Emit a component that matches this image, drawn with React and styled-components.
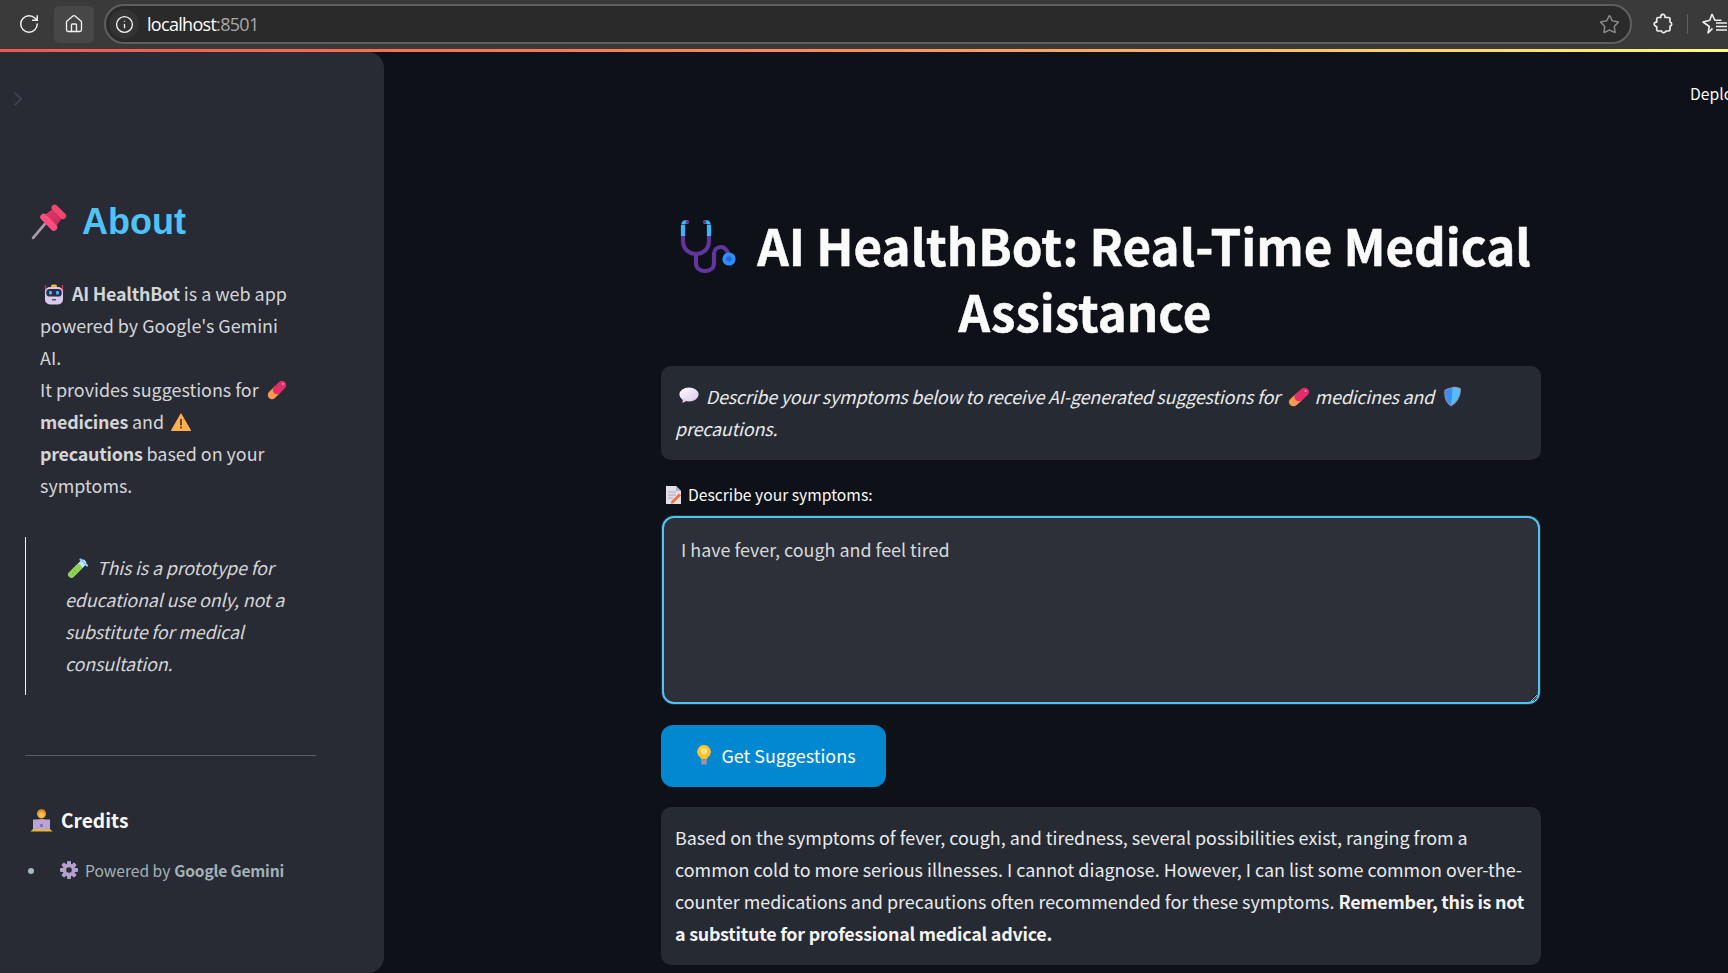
import React from "react";
import styled, { createGlobalStyle } from "styled-components";
import { RotateCw, Home, Info, Star, ChevronRight } from "lucide-react";

const Global = createGlobalStyle`
  html, body { margin: 0; padding: 0; background: #0e1117; }
  body { width: 1728px; height: 973px; overflow: hidden; font-family: "Noto Sans CJK SC", "Noto Sans", sans-serif; }
  * { box-sizing: border-box; }
`;

const Page = styled.div`
  width: 1728px; height: 973px; display: flex; flex-direction: column; overflow: hidden; background: #0e1117;
`;
const BrowserBar = styled.div`
  height: 49px; flex: none; display: flex; align-items: center; background: #3a3a3a; overflow: hidden; padding-bottom: 1px;
  color: #f2f2f2;
`;
const ReloadSlot = styled.div`
  width: 54px; flex: none; display: flex; justify-content: center; padding-left: 4px;
`;
const HomeButton = styled.div`
  width: 40px; height: 37px; flex: none; border-radius: 5px; background: #474747; display: flex; align-items: center; justify-content: center;
`;
const Omnibox = styled.div`
  margin-left: 10px; width: 1528px; height: 40px; flex: none; border: 2px solid #5f5f5f; border-radius: 20px; background: #2a2a2a;
  display: flex; align-items: center; padding: 0 10px 0 3px;
`;
const InfoChip = styled.div`
  width: 30px; height: 30px; border-radius: 50%; background: #333; display: flex; align-items: center; justify-content: center; flex: none;
`;
const Url = styled.div`
  margin-left: 8px; flex: 1; font-family: "Open Sans", sans-serif; font-size: 18px; letter-spacing: -0.7px; color: #fff;
  span { color: #a8a8a8; }
`;
const ToolIcon = styled.div`
  margin-left: ${p => p.$gap}px; flex: none; display: flex; align-items: center;
`;
const ToolDivider = styled.div`
  margin-left: 14px; width: 1px; height: 20px; background: #5f5f5f; flex: none;
`;
const Rainbow = styled.div`
  height: 3px; flex: none; background: linear-gradient(90deg, #f2564f 0%, #fb8f5c 50%, #fdd76e 85%, #fffd80 100%);
`;
const Body = styled.div`
  flex: 1; display: flex; min-height: 0;
`;
const Sidebar = styled.aside`
  width: 384px; flex: none; height: 100%; background: #282b33; border-radius: 0 16px 16px 0; padding: 35px 25px 0 25px;
  display: flex; flex-direction: column;
`;
const Collapse = styled.div`
  margin-left: -19px; height: 24px; color: #3b404b; display: flex; align-items: center;
`;
const AboutTitle = styled.h2`
  margin: 90px 0 0 6px; height: 42px; display: flex; align-items: center; gap: 13px;
  font-family: "Liberation Sans", sans-serif; font-weight: 700; font-size: 36px; line-height: 42px; color: #4fc3f7;
`;
const AboutText = styled.p`
  margin: 34px 0 0 15px; width: 251px; font-size: 17.92px; line-height: 32px; color: #d4d5d8;
  b { font-weight: 700; letter-spacing: -0.25px; }
`;
const Quote = styled.blockquote`
  margin: 36px 0 0; border-left: 1px solid #f0f0f0; height: 158px; padding: 14px 0 0 39px; font-style: italic; font-size: 17.92px; line-height: 32px; color: #d4d5d8;
  width: 291px; letter-spacing: -0.15px;
`;
const Rule = styled.hr`
  margin: 60px 0 1px; width: 291px; border: 0; border-top: 1px solid #5a5d63; height: 0;
`;
const CreditsTitle = styled.h3`
  margin: 47px 0 0 5px; display: flex; align-items: center; gap: 8px; font-size: 19.2px; line-height: 32px; font-weight: 700; color: #fafafa;
`;
const CreditsList = styled.ul`
  margin: 20px 0 0; padding: 0; list-style: none;
`;
const CreditsItem = styled.li`
  display: flex; align-items: center; font-size: 15.6px; line-height: 28px; color: #a3b1b8; padding-left: 35px; position: relative;
  b { font-weight: 700; margin-left: 4px; letter-spacing: -0.2px; }
  &::before { content: ""; position: absolute; left: 3px; top: 12px; width: 6px; height: 6px; border-radius: 50%; background: #a3b8bf; }
`;
const Main = styled.main`
  flex: 1; min-width: 0; overflow: hidden; position: relative; padding: 0 0 0 277px;
`;
const DeployText = styled.div`
  position: absolute; top: 29px; left: 1306px; font-size: 15.7px; line-height: 26px; color: #fafafa; white-space: nowrap;
`;
const Column = styled.div`
  width: 880px; padding-top: 160px;
`;
const Title = styled.h1`
  margin: 0; font-size: 49.28px; line-height: 66px; font-weight: 700; color: #fafafa; text-align: center; -webkit-text-stroke: 0.5px #fafafa;
  &::after { content: ""; display: inline-block; width: 32px; }
`;
const Panel = styled.div`
  margin-top: ${p => p.$top}px; padding: 14px 10px 16px 14px; background: #262a33; border-radius: 10px; font-size: 17.92px; line-height: 32px; color: #e8eaec;
  font-style: ${p => (p.$italic ? "italic" : "normal")};
  letter-spacing: ${p => (p.$italic ? "-0.19px" : "0")};
  b { font-weight: 700; color: #f3f3f3; letter-spacing: -0.25px; }
`;
const FieldLabel = styled.label`
  margin-top: 22px; height: 26px; padding-left: 5px; display: flex; align-items: center; gap: 7px; font-size: 15.68px; line-height: 26px; color: #fafafa;
`;
const Symptoms = styled.textarea`
  display: block; margin: 8px 0 0 1px; width: 878px; height: 188px; padding: 15px 17px; border: 2px solid #4fc3f7; border-radius: 12px; outline: 0;
  background: #2d3039; color: #d8d9db; font-family: inherit; font-size: 17.92px; line-height: 32px; color-scheme: dark;
  box-shadow: 0 0 0 1px #262a33;
`;
const SuggestButton = styled.button`
  display: flex; align-items: center; justify-content: center; gap: 8px; margin-top: 21px; width: 225px; height: 62px; border: 0; border-radius: 12px;
  padding: 0 0 2px 4px;
  background: #0288d1; color: #fff; font-family: inherit; font-size: 17.92px;
`;
const Glyph = styled.svg`
  display: inline-block; flex: none; vertical-align: ${p => p.$drop ?? -3}px; margin: ${p => p.$margin ?? "0 3px"};
`;

const Pin = () => (
  <Glyph width="38" height="38" viewBox="0 0 36 36" $margin="-2px 0 0 0">
    <defs><linearGradient id="pinG" x1="0" y1="0" x2="1" y2="1"><stop offset="0" stopColor="#f0356a"/><stop offset="1" stopColor="#b92c58"/></linearGradient></defs>
    <path d="M2 34L13 21" stroke="#a89aa6" strokeWidth="2.6" strokeLinecap="round"/>
    <path d="M12 13l8-6 9 9-6 8z" fill="url(#pinG)"/>
    <rect x="18" y="6" width="17" height="6" rx="3" transform="rotate(45 26 9)" fill="#f4476f"/>
    <rect x="7" y="16" width="20" height="6.5" rx="3.2" transform="rotate(45 17 19)" fill="#ff4f80"/>
  </Glyph>
);
const Robot = () => (
  <Glyph width="20" height="21" viewBox="0 0 20 21" $drop={-4} $margin="0 4px">
    <path d="M1.5 1v8M18.5 1v8" stroke="#d6335f" strokeWidth="1.2"/>
    <rect x="7" y="0.5" width="6" height="3" rx="1.5" fill="#f5b13c"/>
    <rect x="1" y="3" width="18" height="17.5" rx="5" fill="#d9c9ea"/>
    <rect x="2.3" y="5" width="15.4" height="7.6" rx="3.4" fill="#2d2a48"/>
    <rect x="5" y="7" width="3" height="3.5" rx="1" fill="#35b7f7"/>
    <rect x="12" y="7" width="3" height="3.5" rx="1" fill="#35b7f7"/>
    <rect x="8" y="15" width="4" height="1.4" fill="#544a68"/>
  </Glyph>
);
const Pill = ({ size = 20 }) => (
  <Glyph width={size} height="20" viewBox="0 0 20 20" preserveAspectRatio="none" $drop={-3} $margin="0 1px 0 4px">
    <path d="M5 15L10 10" stroke="#f79a4b" strokeWidth="8.4" strokeLinecap="round"/>
    <path d="M10 10L15 5" stroke="#e42c68" strokeWidth="8.4" strokeLinecap="round"/>
    <circle cx="16" cy="4" r="1" fill="#ff9ab8"/>
  </Glyph>
);
const Warning = () => (
  <Glyph width="20" height="18" viewBox="0 0 20 18" $drop={-2}>
    <path d="M10 .8L19.6 17.5H.4z" fill="#ffb04d" stroke="#ffb04d" strokeLinejoin="round"/>
    <rect x="9.1" y="6" width="1.8" height="6.5" fill="#5a4040"/><rect x="9.1" y="13.6" width="1.8" height="1.8" fill="#5a4040"/>
  </Glyph>
);
const Tube = () => (
  <Glyph width="20" height="20" viewBox="0 0 20 20" $margin="0 5px 0 3px">
    <path d="M3.5 16.5L15 5" stroke="#c6e6f7" strokeWidth="6.4" strokeLinecap="round"/>
    <path d="M3.5 16.5L10.5 9.5" stroke="#8ed24f" strokeWidth="6.4" strokeLinecap="round"/>
    <path d="M12.5 1.5L19 7.5" stroke="#8cd0f5" strokeWidth="2.2" strokeLinecap="round"/>
    <path d="M6 13h1.4M4 15.5h1.4" stroke="#5ea635" strokeWidth="1"/>
  </Glyph>
);
const Coder = () => (
  <Glyph width="23" height="23" viewBox="0 0 23 23" $margin="0">
    <circle cx="11.5" cy="4.8" r="4.6" fill="#e8911f"/>
    <circle cx="11.5" cy="6" r="3" fill="#f6c04e"/>
    <path d="M5 12q6.5-4 13 0v3H5z" fill="#d9a635"/>
    <rect x="3" y="10.5" width="17" height="11" fill="#b9a3da"/>
    <rect x="10" y="15" width="3" height="3" fill="#8b72ad"/>
    <path d="M0.5 22.5L3 20h17l2.5 2.5z" fill="#e6b53f"/>
  </Glyph>
);
const Gear = () => (
  <Glyph width="18" height="18" viewBox="0 0 18 18" $margin="0 7px 0 0">
    <g fill="#b3a1cb">
      {[0, 45, 90, 135].map(a => <rect key={a} x="7" y="0" width="4" height="18" rx="1" transform={`rotate(${a} 9 9)`}/>)}
      <circle cx="9" cy="9" r="6.4"/>
    </g>
    <circle cx="9" cy="9" r="2.8" fill="#282b33"/>
  </Glyph>
);
const Stethoscope = () => (
  <Glyph width="57" height="56" viewBox="0 0 57 56" $drop={-9} $margin="0 21px 0 8px">
    <path d="M4 14v8c0 8 6 13 13 13s13-5 13-13v-8" fill="none" stroke="#5f3599" strokeWidth="4.2"/>
    <path d="M4 6v11M30 6v11" stroke="#3eb8f5" strokeWidth="4.2"/>
    <path d="M4 5.500c0-1.500.8-2.500 2.500-2.500h2.500M30 5.500c0-1.500-.8-2.500-2.500-2.500H25" fill="none" stroke="#3eb8f5" strokeWidth="3.4"/>
    <path d="M7 3h3M24 3h3" stroke="#5f3599" strokeWidth="3.2"/>
    <path d="M17 35v9c0 5 4 8 9 8s9-3 9-8v-9c0-4 3-7 7-7s6 3 8 8" fill="none" stroke="#6236a0" strokeWidth="4.2"/>
    <circle cx="50" cy="40" r="6.6" fill="#2f8dff"/>
    <circle cx="50" cy="40" r="2.8" fill="#2567d6"/>
  </Glyph>
);
const Bubble = () => (
  <Glyph width="20" height="17" viewBox="0 0 20 17" $drop={0} $margin="0 3px 0 4px">
    <defs><linearGradient id="bubG" x1="0" y1="0" x2="1" y2="1"><stop offset="0" stopColor="#ffffff"/><stop offset="1" stopColor="#d9c6ea"/></linearGradient></defs>
    <ellipse cx="10" cy="7.5" rx="9.6" ry="7" fill="url(#bubG)"/>
    <path d="M4 11l-.5 5L9 13z" fill="#e2d4ef"/>
  </Glyph>
);
const Shield = () => (
  <Glyph width="19" height="21" viewBox="0 0 19 21" $drop={-3} $margin="0 3px 0 5px">
    <path d="M9.5 1C6 2 4 2.6 1.5 4c-1 6 .8 13 6.5 16.5C14 17 18 11 18 2.5 15 .8 12 .6 9.5 1z" fill="#8c8fa8"/>
    <path d="M9.7 2C7 2.7 4.8 3.4 2.5 4.6c-.8 5.5 1 11.6 5.6 14.8z" fill="#3b8df0"/>
    <path d="M9.7 2c2.4-.5 4.9-.2 7.3 1.1 0 6.9-3.3 12.4-8.9 16.3z" fill="#55bdfb"/>
  </Glyph>
);
const Memo = () => (
  <Glyph width="15" height="18" viewBox="0 0 15 18" $margin="0">
    <path d="M0 0h10l5 5v13H0z" fill="#e3dfe9"/><path d="M10 0l5 5h-5z" fill="#b9b3c4"/>
    <path d="M2 6h8M2 9h8M2 12h5" stroke="#a9a3b5" strokeWidth="1"/>
    <path d="M5 15.5l8-8 2 2-8 8H5z" fill="#f2713c"/>
  </Glyph>
);
const Bulb = () => (
  <Glyph width="18" height="20" viewBox="0 0 18 20" $margin="0">
    <path d="M9 0a6.8 6.8 0 0 0-4 12.3c.7.6 1 1.3 1.2 2.2h5.600c.2-.9.5-1.600 1.200-2.200A6.8 6.8 0 0 0 9 0z" fill="#fbc02d"/>
    <circle cx="9" cy="6" r="3.4" fill="#ffe27a"/>
    <rect x="6.2" y="15" width="5.6" height="4.6" rx="1.2" fill="#9c8fb0"/>
  </Glyph>
);
const PuzzleGlyph = () => (
  <svg width="20" height="22" viewBox="0 0 20 22" fill="none" stroke="#efefef" strokeWidth="1.7" strokeLinejoin="round">
    <path d="M8 2.5c1-1.600 3.500-1.400 4 .6l.1 1.400h3.400c.8 0 1.500.7 1.500 1.500v3c1.900.4 2.200 3 .6 4-.2.1-.4.2-.6.2v3.300c0 .8-.7 1.500-1.500 1.500H13c-.6 2-3.600 2.200-4.400.2L8.500 18H5.200c-.8 0-1.500-.7-1.500-1.500V13.600C1.300 13.400.3 10.300 2.300 9.300l1.400-.2V6c0-.8.7-1.500 1.500-1.500h2.500c0-.7.1-1.400.3-2z"/>
  </svg>
);
const ListStar = () => (
  <svg width="28" height="24" viewBox="0 0 28 24" fill="none" stroke="#efefef" strokeWidth="1.6" strokeLinejoin="round">
    <path d="M11 2l2.800 6.300h6.700M11.500 16.400L7 21l1.300-6.500L2 10l6.800-1.700L11 2"/>
    <path d="M15 11h11M15 14.500h11M15 18h11"/>
  </svg>
);

export default function App() {
  return (
    <Page>
      <Global />
      <BrowserBar>
        <ReloadSlot><RotateCw size={22} strokeWidth={1.6} /></ReloadSlot>
        <HomeButton><Home size={20} strokeWidth={1.6} /></HomeButton>
        <Omnibox>
          <InfoChip><Info size={19} strokeWidth={1.7} /></InfoChip>
          <Url>localhost<span>:8501</span></Url>
          <Star size={21} strokeWidth={1.6} color="#8e8e8e" />
        </Omnibox>
        <ToolIcon $gap={21}><PuzzleGlyph /></ToolIcon>
        <ToolDivider />
        <ToolIcon $gap={13}><ListStar /></ToolIcon>
      </BrowserBar>
      <Rainbow />
      <Body>
        <Sidebar>
          <Collapse><ChevronRight size={24} strokeWidth={2} /></Collapse>
          <AboutTitle><Pin />About</AboutTitle>
          <AboutText>
            <Robot /> <b>AI HealthBot</b> is a web app powered by Google's Gemini AI.<br />
            It provides suggestions for <Pill /> <b>medicines</b> and <Warning /> <b>precautions</b> based on your symptoms.
          </AboutText>
          <Quote><Tube /> This is a prototype for educational use only, not a substitute for medical consultation.</Quote>
          <Rule />
          <CreditsTitle><Coder />Credits</CreditsTitle>
          <CreditsList>
            <CreditsItem><Gear />Powered by <b>Google Gemini</b></CreditsItem>
          </CreditsList>
        </Sidebar>
        <Main>
          <DeployText>Deploy</DeployText>
          <Column>
            <Title><Stethoscope />AI HealthBot: Real-Time Medical Assistance</Title>
            <Panel $top={22} $italic>
              <Bubble /> Describe your symptoms below to receive AI-generated suggestions for <Pill size={22} /> medicines and <Shield /> precautions.
            </Panel>
            <FieldLabel><Memo />Describe your symptoms:</FieldLabel>
            <Symptoms readOnly defaultValue="I have fever, cough and feel tired" />
            <SuggestButton><Bulb />Get Suggestions</SuggestButton>
            <Panel $top={20}>
              Based on the symptoms of fever, cough, and tiredness, several possibilities exist, ranging from a common cold to more serious illnesses. I cannot diagnose. However, I can list some common over-the-counter medications and precautions often recommended for these symptoms. <b>Remember, this is not a substitute for professional medical advice.</b>
            </Panel>
          </Column>
        </Main>
      </Body>
    </Page>
  );
}
